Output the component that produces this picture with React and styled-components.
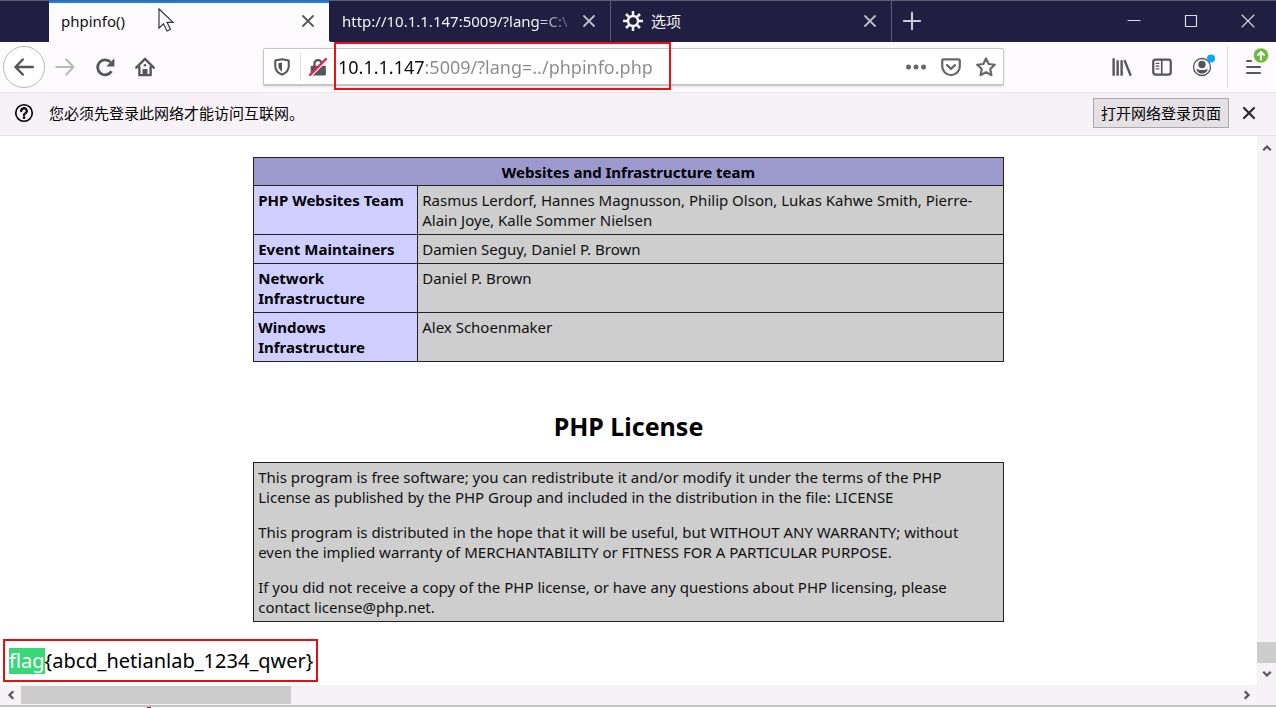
import React from "react";
import styled, { createGlobalStyle, css } from "styled-components";

const GlobalStyle = createGlobalStyle`
  *, *::before, *::after {
    box-sizing: border-box;
  }
  body {
    margin: 0;
    background: #fff;
    color: #000;
    font-family: "Noto Sans", "Noto Sans CJK SC", sans-serif;
    font-size: 15px;
    line-height: 20px;
  }
  button, input {
    font: inherit;
    color: inherit;
  }
`;

const Window = styled.div`
  height: 100vh;
  display: flex;
  flex-direction: column;
  overflow: hidden;
`;

/* ---------- tab strip ---------- */
const TabStrip = styled.header`
  display: flex;
  flex: none;
  height: 42px;
  padding-left: 49px;
  padding-bottom: 1px;
  background: #211f41;
  border-top: 1px solid #5c5d72;
`;

const Tab = styled.div`
  position: relative;
  display: flex;
  align-items: center;
  flex: 0 1 281px;
  min-width: 0;
  padding: 0 12px;
  color: #f4f3f7;
  border-right: 1px solid #5c5b73;
  ${({ $active }) =>
    $active &&
    css`
      color: #111;
      background: #fefbff;
      border-right-color: #211f41;
      box-shadow: inset 0 2px 0 #0a84ff, 0 1px 0 #fefbff;
    `}
`;

const TabIcon = styled.span`
  display: flex;
  margin-right: 8px;
`;

const TabTitle = styled.span`
  flex: 1;
  min-width: 0;
  overflow: hidden;
  white-space: nowrap;
  ${({ $fade }) =>
    $fade &&
    css`
      mask-image: linear-gradient(to left, transparent, #000 44px);
    `}
`;

const IconButton = styled.button`
  position: relative;
  display: flex;
  align-items: center;
  justify-content: center;
  flex: none;
  width: ${({ $width }) => $width || 40}px;
  height: ${({ $height }) => $height || 40}px;
  padding: 0;
  border: 0;
  background: transparent;
  color: ${({ $color }) => $color || "#55555a"};
`;

const Pointer = styled.svg`
  position: absolute;
  left: 108px;
  top: 6px;
`;

const WindowControls = styled.div`
  display: flex;
  margin-left: auto;
`;

/* ---------- navigation toolbar ---------- */
const Toolbar = styled.nav`
  display: flex;
  align-items: center;
  flex: none;
  height: 51px;
  padding: 0 3px;
  background: #fefbff;
  border-bottom: 1px solid #e6e2e6;
`;

const BackButton = styled(IconButton)`
  border: 1px solid #b9b7ba;
  border-radius: 50%;
  background: #fff;
`;

const Spacer = styled.div`
  flex: 0 1 98px;
`;

const UrlBar = styled.div`
  position: relative;
  display: flex;
  align-items: center;
  flex: 1;
  height: 38px;
  min-width: 0;
  background: #fff;
  border: 1px solid #c6c5c8;
  border-bottom-width: 2px;
  border-radius: 2px;
  box-shadow: 0 1px 3px rgba(0, 0, 0, 0.1);
`;

const Divider = styled.span`
  flex: none;
  width: 1px;
  height: ${({ $height }) => $height}px;
  margin: 0 ${({ $gap }) => $gap || 0}px;
  background: #dddbe0;
`;

/* host in black, the rest of the address in grey */
const UrlInput = styled.input`
  flex: 1;
  min-width: 0;
  height: 30px;
  padding: 0 0 0 3px;
  border: 0;
  outline: 0;
  font-size: 18px;
  color: transparent;
  background: linear-gradient(to right, #0c0c0d 89px, #8a8a8c 89px);
  background-clip: text;
`;

const UrlMark = styled.div`
  position: absolute;
  left: 70px;
  top: -7px;
  width: 337px;
  height: 48px;
  border: 2px solid #f00f0f;
  pointer-events: none;
`;

/* ---------- notification ---------- */
const Notice = styled.div`
  display: flex;
  align-items: center;
  flex: none;
  height: 43px;
  padding: 0 7px 2px 14px;
  gap: 15px;
  background: #f6f2f6;
  border-bottom: 1px solid #e6e3e6;
`;

const NoticeText = styled.span`
  flex: 1;
`;

const LoginButton = styled.button`
  height: 30px;
  padding: 0 7px;
  border: 1px solid #a9a8ab;
  background: #e4e0e4;
  white-space: nowrap;
`;

const NoticeActions = styled.div`
  display: flex;
  align-items: center;
`;

/* ---------- page ---------- */
const Viewport = styled.div`
  display: grid;
  grid-template-columns: minmax(0, 1fr) 19px;
  grid-template-rows: minmax(0, 1fr) 20px;
  flex: 1;
  min-height: 0;
  border-bottom: 2px solid #c3c0c5;
`;

const Page = styled.main`
  overflow: hidden;
  padding: 21px 3px 0;
`;

const Sheet = styled.section`
  width: 60%;
  min-width: 750px;
  margin: 0 auto;
`;

const Credits = styled.table`
  width: 100%;
  border-collapse: collapse;
  color: #111;
  td, th {
    border: 1px solid #222;
    padding: 4px;
    text-align: left;
    vertical-align: top;
  }
  thead th {
    padding-bottom: 3px;
    background: #9c9acd;
    text-align: center;
    color: #000;
  }
  tbody th {
    width: 164px;
    background: #ceceff;
    color: #000;
  }
  td {
    background: #cecece;
  }
`;

const Heading = styled.h2`
  margin: 48px 0 19px;
  font-size: 25px;
  line-height: 33px;
  text-align: center;
`;

const License = styled.div`
  padding: 4px;
  border: 1px solid #222;
  background: #cecece;
  color: #111;
  p {
    margin: 0 0 15px;
  }
  p:last-child {
    margin-bottom: 0;
  }
`;

const Flag = styled.div`
  width: fit-content;
  margin-top: 17px;
  padding: 7px 3px 6px 4px;
  border: 2px solid #e60f0f;
  font-size: 20px;
  line-height: 26px;
`;

const Match = styled.mark`
  display: inline-block;
  background: #38d878;
  color: #fff;
`;

/* ---------- scrollbars ---------- */
const Scrollbar = styled.div`
  display: flex;
  align-items: stretch;
  justify-content: space-between;
  flex-direction: ${({ $vertical }) => ($vertical ? "column" : "row")};
  background: #f6f2f6;
`;

const Track = styled.div`
  display: flex;
  flex: 1;
  flex-direction: ${({ $vertical }) => ($vertical ? "column" : "row")};
  justify-content: ${({ $vertical }) => ($vertical ? "flex-end" : "flex-start")};
  padding: ${({ $vertical }) => ($vertical ? "0" : "1px 0")};
`;

const Thumb = styled.div`
  flex: 0 0 ${({ $size }) => $size}px;
  background: #cdcdcd;
`;

const Corner = styled.div`
  background: #f6f2f6;
`;

const EdgeMark = styled.div`
  flex: none;
  width: 4px;
  height: 1px;
  margin-left: 147px;
  background: #b01020;
`;

const Icon = ({ size = 20, children, ...rest }) => (
  <svg
    width={size}
    height={size}
    viewBox="0 0 16 16"
    fill="none"
    stroke="currentColor"
    strokeWidth="1.6"
    strokeLinecap="round"
    strokeLinejoin="round"
    aria-hidden="true"
    {...rest}
  >
    {children}
  </svg>
);

const CloseIcon = (props) => (
  <Icon size={16} strokeWidth="1.8" {...props}>
    <path d="M3 3l10 10M13 3L3 13" />
  </Icon>
);

const GearIcon = () => (
  <Icon size={20} strokeLinecap="butt">
    <circle cx="8" cy="8" r="4" strokeWidth="1.9" />
    <path
      strokeWidth="2"
      d="M8 0v4M8 12v4M0 8h4M12 8h4M2.4 2.4l2.6 2.6M11 11l2.6 2.6M13.6 2.4L11 5M5 11l-2.6 2.6"
    />
  </Icon>
);

const Chevron = ({ d }) => (
  <Icon size={12} strokeWidth="3" strokeLinecap="butt" strokeLinejoin="miter">
    <path d={d} />
  </Icon>
);

const team = [
  [
    "PHP Websites Team",
    "Rasmus Lerdorf, Hannes Magnusson, Philip Olson, Lukas Kahwe Smith, Pierre-Alain Joye, Kalle Sommer Nielsen",
  ],
  ["Event Maintainers", "Damien Seguy, Daniel P. Brown"],
  ["Network Infrastructure", "Daniel P. Brown"],
  ["Windows Infrastructure", "Alex Schoenmaker"],
];

function Tabs() {
  return (
    <TabStrip>
      <Tab $active>
        <TabTitle>phpinfo()</TabTitle>
        <IconButton $width={18} $height={18} aria-label="Close tab">
          <CloseIcon />
        </IconButton>
        <Pointer width="18" height="26" viewBox="0 0 18 26" aria-hidden="true">
          <path
            d="M2 2v19l4.500-4.200 3.500 7.200 3.500-1.700-3.500-7H16z"
            fill="#fff"
            stroke="#33334a"
            strokeWidth="1.2"
          />
        </Pointer>
      </Tab>
      <Tab>
        <TabTitle $fade>http://10.1.1.147:5009/?lang=C:\</TabTitle>
        <IconButton $width={18} $height={18} $color="#bdbcc8" aria-label="Close tab">
          <CloseIcon />
        </IconButton>
      </Tab>
      <Tab>
        <TabIcon>
          <GearIcon />
        </TabIcon>
        <TabTitle>选项</TabTitle>
        <IconButton $width={18} $height={18} $color="#bdbcc8" aria-label="Close tab">
          <CloseIcon />
        </IconButton>
      </Tab>
      <IconButton $color="#cbcad5" aria-label="New tab">
        <Icon strokeWidth="1.7">
          <path d="M8 1.500v13M1.500 8h13" />
        </Icon>
      </IconButton>
      <WindowControls>
        <IconButton $width={57} $color="#dddce5" aria-label="Minimize">
          <Icon size={16} strokeWidth="1.200">
            <path d="M2 7.500h12" />
          </Icon>
        </IconButton>
        <IconButton $width={57} $color="#dddce5" aria-label="Maximize">
          <Icon size={16} strokeWidth="1.200" strokeLinejoin="miter">
            <path d="M2.500 2.500h11v11h-11z" />
          </Icon>
        </IconButton>
        <IconButton $width={57} $color="#dddce5" aria-label="Close window">
          <Icon size={16} strokeWidth="1.100">
            <path d="M2 2l12 12M14 2L2 14" />
          </Icon>
        </IconButton>
      </WindowControls>
    </TabStrip>
  );
}

function NavBar() {
  return (
    <Toolbar>
      <BackButton $width={42} $height={42} aria-label="Back">
        <Icon strokeWidth="2">
          <path d="M15 8H1.500M7 2L1.200 8 7 14" />
        </Icon>
      </BackButton>
      <IconButton $color="#bab8bc" aria-label="Forward">
        <Icon strokeWidth="1.700">
          <path d="M1 8h13.500M9 2l5.800 6L9 14" />
        </Icon>
      </IconButton>
      <IconButton aria-label="Reload">
        <Icon fill="none" strokeWidth="2.200" strokeLinecap="butt">
          <path d="M13.200 11.400A6 6 0 1 1 12.400 4" />
          <path d="M15.500 1v6.500H9z" fill="currentColor" stroke="none" />
        </Icon>
      </IconButton>
      <IconButton aria-label="Home">
        <Icon>
          <path strokeWidth="1.900" d="M1 8.500L8 1.500l7 7" />
          <path strokeWidth="1.900" d="M3.500 8v6.500h9V8" />
          <path d="M6.500 14.500V10h3v4.500z" fill="currentColor" strokeWidth="1" />
          <circle cx="8" cy="6.500" r="1" fill="currentColor" stroke="none" />
        </Icon>
      </IconButton>
      <Spacer />
      <UrlBar>
        <IconButton $width={36} $height={34} aria-label="Tracking protection">
          <Icon size={18}>
            <path strokeWidth="1.800" d="M8 1.200L14 2.200v5c0 3.800-2.800 6.400-6 7.600-3.200-1.200-6-3.800-6-7.600v-5z" />
            <path fill="currentColor" stroke="none" d="M8 4v8c-2-1-3.200-2.800-3.200-4.800V4.600z" />
          </Icon>
        </IconButton>
        <Divider $height={28} />
        <IconButton $width={34} $height={34} aria-label="Connection not secure">
          <Icon size={18}>
            <path strokeWidth="2" d="M4.800 7V5a3.200 3.200 0 0 1 6.400 0v2" />
            <rect x="1.500" y="6.800" width="13.500" height="8.700" rx="1" fill="currentColor" stroke="none" />
            <path stroke="#fff" strokeWidth="1.200" d="M2 16L16 2" />
            <path stroke="#f0205a" strokeWidth="2" d="M0.800 15.200L15.200 0.800" />
          </Icon>
        </IconButton>
        <UrlInput aria-label="Address" defaultValue="10.1.1.147:5009/?lang=../phpinfo.php" />
        <IconButton $width={35} $height={34} $color="#68686b" aria-label="Page actions">
          <Icon fill="currentColor" stroke="none">
            <circle cx="2" cy="8" r="2" />
            <circle cx="8" cy="8" r="2" />
            <circle cx="14" cy="8" r="2" />
          </Icon>
        </IconButton>
        <IconButton $width={35} $height={34} $color="#68686b" aria-label="Save to Pocket">
          <Icon strokeWidth="1.800">
            <path d="M2 1.800h12a1 1 0 0 1 1 1V7.500a7 7 0 0 1-14 0V2.800a1 1 0 0 1 1-1z" />
            <path d="M4.800 6.500L8 9.500l3.200-3" />
          </Icon>
        </IconButton>
        <IconButton $width={35} $height={34} $color="#68686b" aria-label="Bookmark this page">
          <Icon strokeWidth="1.800">
            <path d="M8 1.200l2.100 4.400 4.900.6-3.600 3.400.9 4.900L8 12.200l-4.300 2.300.9-4.900L1 6.200l4.900-.6z" />
          </Icon>
        </IconButton>
        <UrlMark />
      </UrlBar>
      <Spacer />
      <IconButton aria-label="Library">
        <Icon strokeWidth="1.900" strokeLinecap="butt">
          <path d="M1.300 1v14M4.500 2.500V15M7.700 2.500V15M10 2.500L15 15" />
        </Icon>
      </IconButton>
      <IconButton aria-label="Sidebars">
        <Icon strokeWidth="1.800">
          <rect x="1" y="2" width="14" height="12" rx="1.800" />
          <path strokeWidth="1.300" d="M7.800 2v12" />
          <path strokeWidth="1" d="M3.300 5h2.200M3.300 7.200h2.200M3.300 9.400h2.200" />
        </Icon>
      </IconButton>
      <IconButton aria-label="Account">
        <Icon size={26} viewBox="0 0 26 26">
          <circle cx="13" cy="13" r="8.500" strokeWidth="1.300" />
          <circle cx="13" cy="10.500" r="3.700" fill="currentColor" stroke="none" />
          <path d="M7.500 14.500c1.500 1 3 1.500 5.500 1.500s4-.5 5.500-1.500c0 3.500-2.500 5-5.500 5s-5.500-1.500-5.500-5z" fill="currentColor" stroke="none" />
          <circle cx="22" cy="4.500" r="4" fill="#00a8ff" stroke="none" />
        </Icon>
      </IconButton>
      <Divider $height={42} $gap={5} />
      <IconButton aria-label="Open menu">
        <Icon size={40} viewBox="0 0 40 40" strokeWidth="2">
          <path d="M14 14h4M14 20h13M14 26h13" />
          <circle cx="28" cy="8.500" r="7.300" fill="#6cbd3c" stroke="none" />
          <path stroke="#fff" d="M28 12.500v-7M25 8l3-3 3 3" />
        </Icon>
      </IconButton>
    </Toolbar>
  );
}

function LoginNotice() {
  return (
    <Notice>
      <Icon strokeWidth="1.300">
        <circle cx="8" cy="8" r="6.600" />
        <path strokeWidth="1.800" d="M5.800 6.500a2.200 2.200 0 1 1 3.300 1.800c-.8.400-1.100.7-1.100 1.300" />
        <circle cx="8" cy="11.700" r="1.100" fill="currentColor" stroke="none" />
      </Icon>
      <NoticeText>您必须先登录此网络才能访问互联网。</NoticeText>
      <NoticeActions>
        <LoginButton>打开网络登录页面</LoginButton>
        <IconButton $color="#2a2a2e" aria-label="Dismiss">
          <CloseIcon strokeWidth="2.200" />
        </IconButton>
      </NoticeActions>
    </Notice>
  );
}

export default function App() {
  return (
    <>
      <GlobalStyle />
      <Window>
        <Tabs />
        <NavBar />
        <LoginNotice />
        <Viewport>
          <Page>
            <Sheet>
              <Credits>
                <thead>
                  <tr>
                    <th colSpan={2}>Websites and Infrastructure team</th>
                  </tr>
                </thead>
                <tbody>
                  {team.map(([role, names]) => (
                    <tr key={role}>
                      <th scope="row">{role}</th>
                      <td>{names}</td>
                    </tr>
                  ))}
                </tbody>
              </Credits>
              <Heading>PHP License</Heading>
              <License>
                <p>
                  This program is free software; you can redistribute it and/or modify it under the terms of the PHP
                  <br />
                  License as published by the PHP Group and included in the distribution in the file: LICENSE
                </p>
                <p>
                  This program is distributed in the hope that it will be useful, but WITHOUT ANY WARRANTY; without
                  <br />
                  even the implied warranty of MERCHANTABILITY or FITNESS FOR A PARTICULAR PURPOSE.
                </p>
                <p>
                  If you did not receive a copy of the PHP license, or have any questions about PHP licensing, please
                  <br />
                  contact license@php.net.
                </p>
              </License>
            </Sheet>
            <Flag>
              <Match>flag</Match>
              {"{abcd_hetianlab_1234_qwer}"}
            </Flag>
          </Page>
          <Scrollbar $vertical>
            <IconButton $width={19} $height={23} aria-label="Scroll up">
              <Chevron d="M3 11l5-5 5 5" />
            </IconButton>
            <Track $vertical>
              <Thumb $size={21} />
            </Track>
            <IconButton $width={19} $height={22} aria-label="Scroll down">
              <Chevron d="M3 5l5 5 5-5" />
            </IconButton>
          </Scrollbar>
          <Scrollbar>
            <IconButton $width={21} $height={20} aria-label="Scroll left">
              <Chevron d="M11 3L6 8l5 5" />
            </IconButton>
            <Track>
              <Thumb $size={270} />
            </Track>
            <IconButton $width={21} $height={20} aria-label="Scroll right">
              <Chevron d="M5 3l5 5-5 5" />
            </IconButton>
          </Scrollbar>
          <Corner />
        </Viewport>
        <EdgeMark />
      </Window>
    </>
  );
}
